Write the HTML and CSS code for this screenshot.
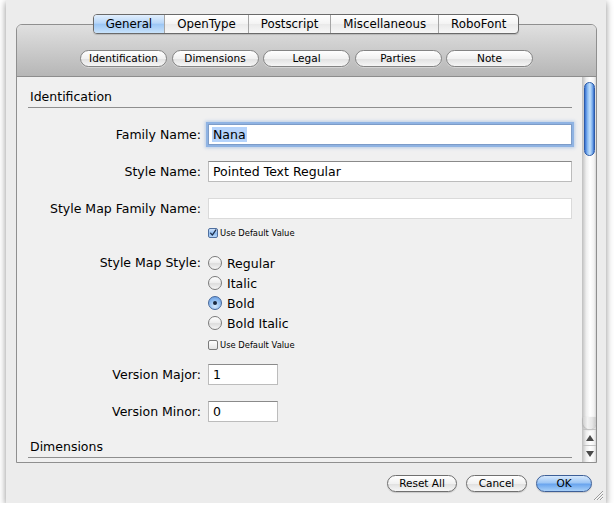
FILE: index.html
```html
<!DOCTYPE html>
<html>
<head>
<meta charset="utf-8">
<link rel="stylesheet" href="styles.css">
</head>
<body>
<div class="window">
  <div class="tabs">
    <div class="tab sel">General</div>
    <div class="tab">OpenType</div>
    <div class="tab">Postscript</div>
    <div class="tab">Miscellaneous</div>
    <div class="tab">RoboFont</div>
  </div>
  <div class="tabbox">
    <div class="subbar">
      <div class="pill">Identification</div>
      <div class="pill">Dimensions</div>
      <div class="pill">Legal</div>
      <div class="pill">Parties</div>
      <div class="pill">Note</div>
    </div>
    <div class="content">
      <div class="scroll">
        <div class="sec">Identification</div>

        <div class="row r-family">
          <div class="label">Family Name:</div>
          <div class="field focus"><span class="hl">Nana</span></div>
        </div>
        <div class="row r-style">
          <div class="label">Style Name:</div>
          <div class="field">Pointed Text Regular</div>
        </div>
        <div class="row r-smfn">
          <div class="label">Style Map Family Name:</div>
          <div class="field dis"></div>
        </div>
        <div class="row r-chk1">
          <div class="label"></div>
          <div class="chkrow"><span class="chk on"><svg viewBox="0 0 10 10" width="10" height="10"><path d="M2 5.2 L4.2 7.6 L8.6 1.2" fill="none" stroke="#1d2f4d" stroke-width="1.6" stroke-linecap="round" stroke-linejoin="round"/></svg></span>Use Default Value</div>
        </div>
        <div class="row r-radio">
          <div class="label rlabel">Style Map Style:</div>
          <div class="radios">
            <div class="radio"><span class="rb"></span>Regular</div>
            <div class="radio"><span class="rb"></span>Italic</div>
            <div class="radio"><span class="rb on"><span class="dot"></span></span>Bold</div>
            <div class="radio"><span class="rb"></span>Bold Italic</div>
          </div>
        </div>
        <div class="row r-chk2">
          <div class="label"></div>
          <div class="chkrow"><span class="chk"></span>Use Default Value</div>
        </div>
        <div class="row r-vmaj">
          <div class="label">Version Major:</div>
          <div class="field short">1</div>
        </div>
        <div class="row r-vmin">
          <div class="label">Version Minor:</div>
          <div class="field short">0</div>
        </div>
        <div class="sec sec2">Dimensions</div>
      </div>
      <div class="vscroll">
        <div class="thumb"></div>
        <div class="track"></div>
        <div class="cap"></div>
        <div class="arrow"><svg viewBox="0 0 8 6" width="8" height="6"><path d="M4 0 L8 6 L0 6 Z" fill="#4a4a4a"/></svg></div>
        <div class="arrow down"><svg viewBox="0 0 8 6" width="8" height="6"><path d="M0 0 L8 0 L4 6 Z" fill="#4a4a4a"/></svg></div>
      </div>
    </div>
  </div>
  <div class="buttons">
    <div class="btn reset">Reset All</div>
    <div class="btn cancel">Cancel</div>
    <div class="btn ok">OK</div>
  </div>
  <svg class="grip" viewBox="0 0 11 11" width="11" height="11">
    <path d="M1 10 L10 1 M4 10 L10 4 M7 10 L10 7" stroke="#9a9a9a" stroke-width="1"/>
    <path d="M2 10 L10 2 M5 10 L10 5 M8 10 L10 8" stroke="#fafafa" stroke-width="1"/>
  </svg>
</div>
</body>
</html>
```

FILE: styles.css
```css
html, body {
  margin: 0;
  padding: 0;
  background: #ffffff;
}
body {
  font-family: "DejaVu Sans", "Liberation Sans", sans-serif;
  color: #000;
}
.window {
  position: relative;
  margin-left: 6px;
  width: 600px;
  height: 503px;
  box-sizing: border-box;
  padding-top: 14px;
  background: #ececec;
  box-shadow: 0 2px 7px rgba(0,0,0,0.45);
}

/* segmented tabs */
.tabs {
  position: relative;
  z-index: 2;
  display: flex;
  width: max-content;
  margin: 0 auto -10px;
  height: 20px;
  box-sizing: border-box;
  border: 1px solid #6a6a6a;
  border-radius: 4px;
  overflow: hidden;
  background: linear-gradient(#ffffff, #f3f3f3 50%, #e9e9e9 51%, #f7f7f7);
  box-shadow: 0 1px 1px rgba(0,0,0,0.15);
}
.tab {
  padding: 0 12px;
  font-size: 11.8px;
  line-height: 18px;
  border-left: 1px solid #a5a5a5;
}
.tab:first-child { border-left: none; }
.tab.sel {
  background: linear-gradient(#e2effd, #b7d6f8 45%, #9cc6f4 52%, #c9e3fb);
}

/* tab box */
.tabbox {
  margin: 0 9px 0 10px;
  height: 439px;
  box-sizing: border-box;
  border: 1px solid #8f8f8f;
  border-radius: 6px 6px 0 0;
  display: flex;
  flex-direction: column;
  overflow: hidden;
}
.subbar {
  height: 52px;
  box-sizing: border-box;
  padding-top: 25px;
  border-bottom: 1px solid #8d8d8d;
  background: linear-gradient(#e0e0e0, #b6b6b6);
  display: flex;
  justify-content: center;
  gap: 4.5px;
}
.pill {
  width: 87px;
  height: 17px;
  box-sizing: border-box;
  border: 1px solid #848484;
  border-radius: 9px;
  background: linear-gradient(#ffffff, #f1f1f1 50%, #e2e2e2 55%, #f6f6f6);
  font-size: 10.5px;
  line-height: 15px;
  text-align: center;
  box-shadow: 0 1px 0 rgba(255,255,255,0.35);
}

.content {
  flex: 1;
  display: flex;
  background: #f0f0f0;
}
.scroll {
  flex: 1;
  padding: 11px 10px 0 11px;
}
.sec {
  font-size: 12.5px;
  line-height: 17px;
  height: 17px;
  padding: 0 0 2px 2px;
  border-bottom: 1px solid #8e8e8e;
}
.sec2 { margin-top: 16px; }

.row {
  display: grid;
  grid-template-columns: 173px 364px;
  column-gap: 7px;
  align-items: center;
}
.label {
  text-align: right;
  font-size: 12.5px;
  white-space: nowrap;
}
.field {
  height: 21px;
  box-sizing: border-box;
  background: #fff;
  border: 1px solid #bcbcbc;
  border-top-color: #8a8a8a;
  font-size: 12.5px;
  line-height: 19px;
  padding-left: 4px;
}
.field.focus {
  border-color: #7d9cc8;
  box-shadow: 0 0 0 2px #8fb3e3, 0 0 3px 3px rgba(120,160,220,0.45);
}
.field.dis {
  border-color: #dadada;
}
.field.short { width: 70px; }
.hl { background: #b5d3fb; padding: 0 1px; margin-left: -1px; }

.r-family { margin-top: 16px; }
.r-style { margin-top: 16px; }
.r-smfn { margin-top: 16px; }
.r-chk1 { margin-top: 8px; }
.r-radio { margin-top: 14px; align-items: start; }
.r-chk2 { margin-top: 6px; }
.r-vmaj { margin-top: 13px; }
.r-vmin { margin-top: 16px; }

.chkrow {
  display: flex;
  align-items: center;
  height: 12px;
  font-size: 8.4px;
}
.chk {
  width: 10px;
  height: 10px;
  box-sizing: border-box;
  border: 1px solid #7b7b7b;
  border-radius: 2px;
  background: linear-gradient(#ffffff, #e4e4e4);
  margin-right: 2px;
  display: flex;
  align-items: center;
  justify-content: center;
}
.chk.on {
  border-color: #4f6f9f;
  background: linear-gradient(#cfe2fa, #8dbbef 55%, #b6d5f7);
}
.chk svg { display: block; }

.rlabel { line-height: 20px; }
.radios { display: flex; flex-direction: column; }
.radio {
  height: 20px;
  display: flex;
  align-items: center;
  font-size: 12.5px;
}
.rb {
  width: 14px;
  height: 14px;
  box-sizing: border-box;
  border: 1px solid #7a7a7a;
  border-radius: 50%;
  background: linear-gradient(#ffffff, #ececec 50%, #dcdcdc 55%, #f6f6f6);
  margin-right: 5px;
  display: flex;
  align-items: center;
  justify-content: center;
}
.rb.on {
  border-color: #45679a;
  background: radial-gradient(circle at 50% 75%, #d5e9fd, #8ebcf0 55%, #5f93dc);
}
.dot {
  width: 4px;
  height: 4px;
  border-radius: 50%;
  background: #1b2a40;
}

/* scrollbar */
.vscroll {
  width: 14px;
  display: flex;
  flex-direction: column;
  background: linear-gradient(to right, #c9c9c9, #eeeeee 25%, #ffffff 55%, #f3f3f3 85%, #d6d6d6);
  border-left: 1px solid #c4c4c4;
  box-sizing: border-box;
}
.thumb {
  width: 11px;
  height: 74px;
  margin: 5px auto 0;
  box-sizing: border-box;
  border: 1px solid #2c5ba8;
  border-radius: 6px;
  background: linear-gradient(to right, #3a73d3, #8ebef3 30%, #c4e0fb 55%, #7fb2ee 80%, #3569c8);
}
.track { flex: 1; }
.cap {
  height: 12px;
  border-radius: 0 0 7px 7px;
  background: linear-gradient(to right, #cfcfcf, #f2f2f2 35%, #e6e6e6 70%, #c8c8c8);
  box-shadow: 0 1px 2px rgba(0,0,0,0.25);
}
.arrow {
  height: 16px;
  display: flex;
  align-items: center;
  justify-content: center;
  border-top: 1px solid #c3c3c3;
  box-sizing: border-box;
}
.arrow svg { display: block; }
.arrow.down { height: 17px; }

/* bottom buttons */
.buttons {
  display: flex;
  justify-content: flex-end;
  gap: 9px;
  margin-top: 12px;
  padding-right: 14px;
}
.btn {
  height: 17px;
  box-sizing: border-box;
  border: 1px solid #6f6f6f;
  border-radius: 9px;
  background: linear-gradient(#ffffff, #f1f1f1 50%, #e1e1e1 55%, #f7f7f7);
  font-size: 10.5px;
  line-height: 15px;
  text-align: center;
  box-shadow: 0 1px 1px rgba(0,0,0,0.15);
}
.reset { width: 70px; }
.cancel { width: 61px; }
.ok {
  width: 56px;
  border-color: #3d5f97;
  background: linear-gradient(#d6e8fc, #9dc6f5 45%, #6aa5ee 55%, #a8d0f8);
}
.grip {
  position: absolute;
  right: 2px;
  bottom: 2px;
}
```
